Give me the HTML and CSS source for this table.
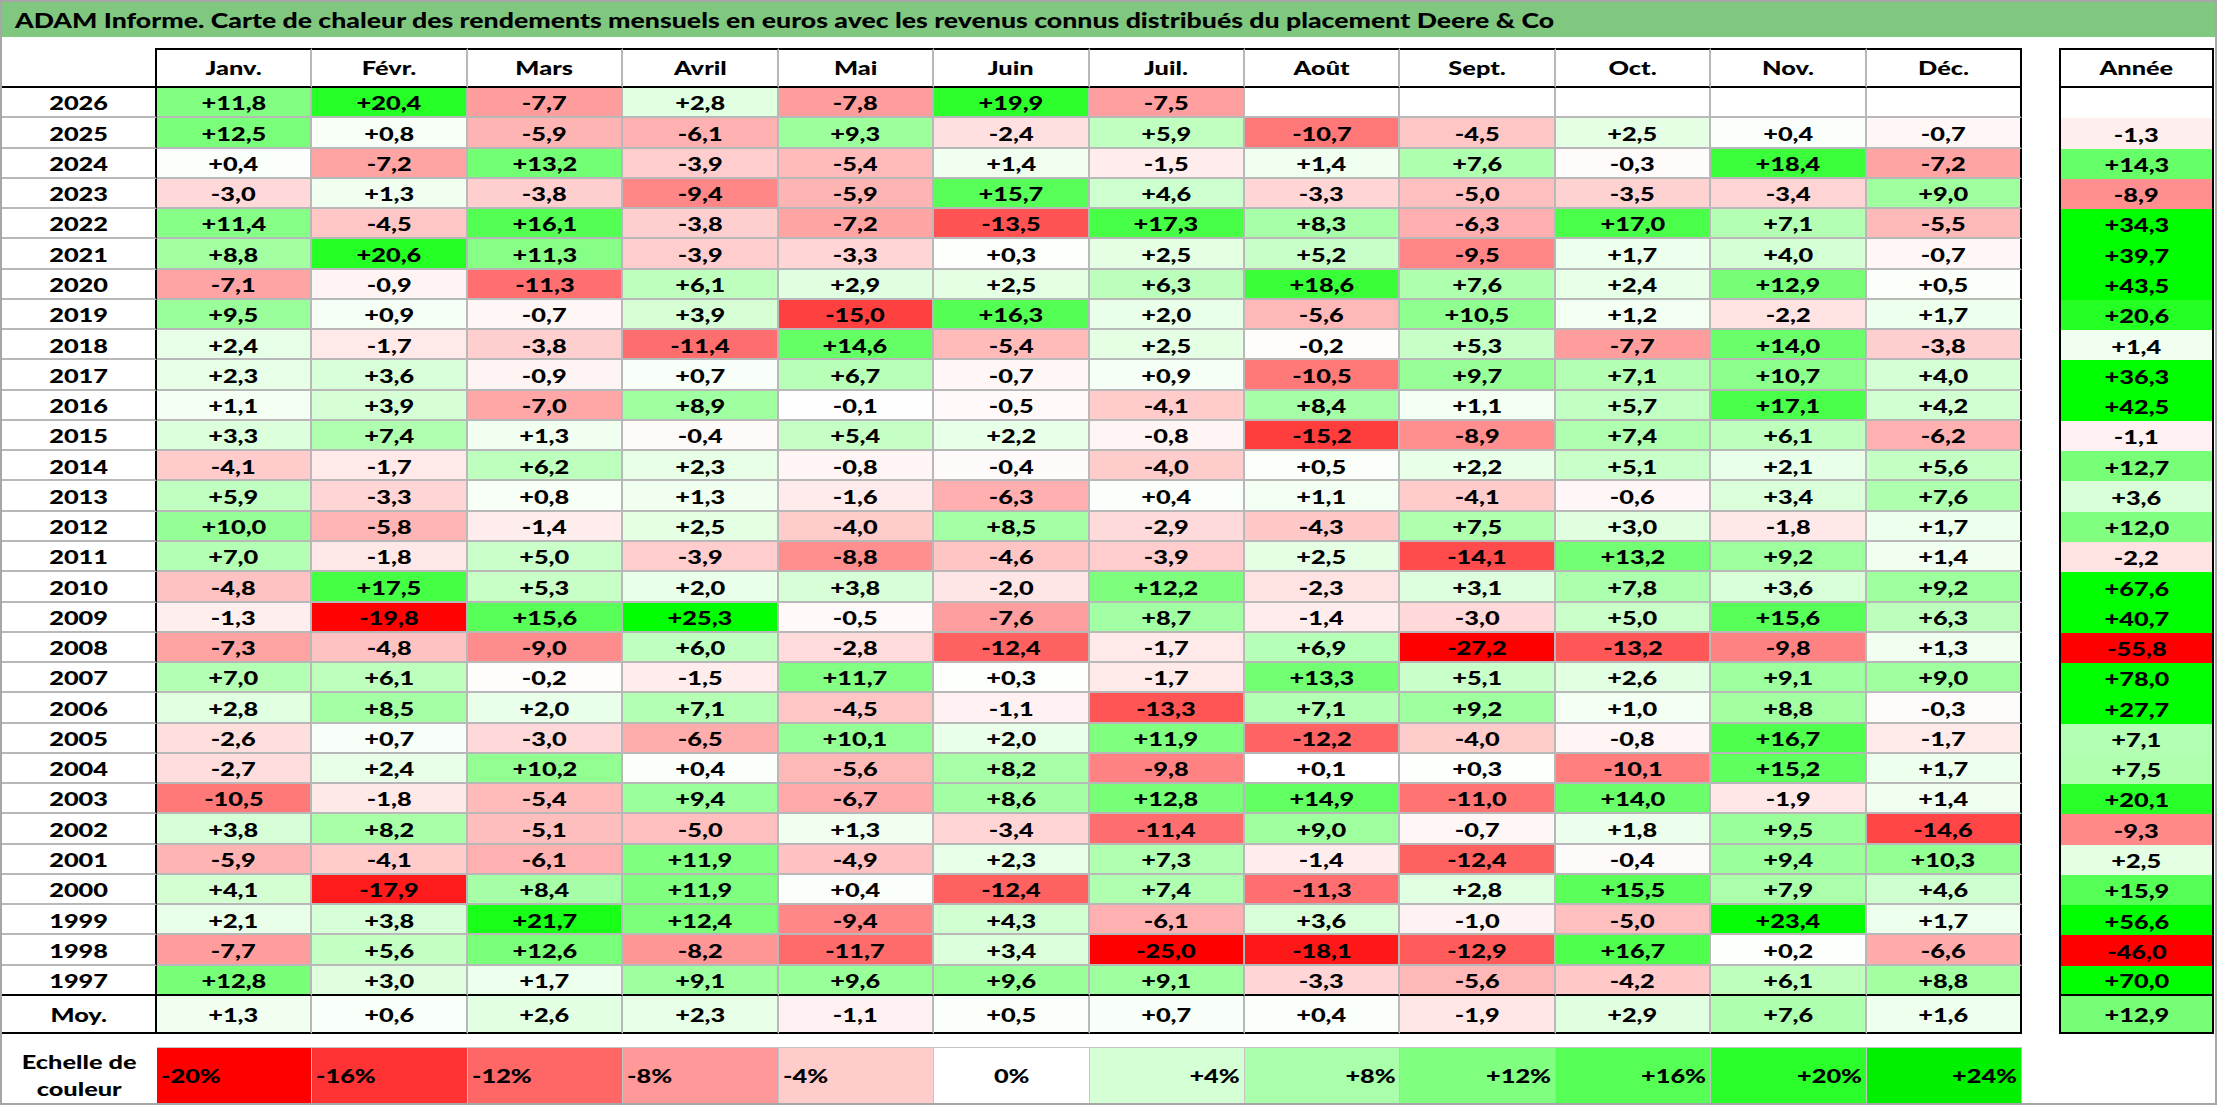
FILE: index.html
```html
<!DOCTYPE html>
<html lang="fr">
<head>
<meta charset="utf-8">
<title>ADAM Informe - Deere &amp; Co</title>
<link rel="stylesheet" href="styles.css">
</head>
<body>
<div class="frame">
  <div class="title"><b>ADAM Informe. Carte de chaleur des rendements mensuels en euros avec les revenus connus distribués du placement Deere &amp; Co</b></div>
  <div class="tables">
    <div class="main">
      <div class="row hdr"><div></div><div><b>Janv.</b></div><div><b>Févr.</b></div><div><b>Mars</b></div><div><b>Avril</b></div><div><b>Mai</b></div><div><b>Juin</b></div><div><b>Juil.</b></div><div><b>Août</b></div><div><b>Sept.</b></div><div><b>Oct.</b></div><div><b>Nov.</b></div><div><b>Déc.</b></div></div>
      <div class="row"><div><b>2026</b></div><div class="p" style="--c:130"><b>+11,8</b></div><div class="p" style="--c:38"><b>+20,4</b></div><div class="n" style="--c:157"><b>-7,7</b></div><div class="p" style="--c:225"><b>+2,8</b></div><div class="n" style="--c:156"><b>-7,8</b></div><div class="p" style="--c:44"><b>+19,9</b></div><div class="n" style="--c:159"><b>-7,5</b></div><div></div><div></div><div></div><div></div><div></div></div>
      <div class="row"><div><b>2025</b></div><div class="p" style="--c:122"><b>+12,5</b></div><div class="p" style="--c:247"><b>+0,8</b></div><div class="n" style="--c:180"><b>-5,9</b></div><div class="n" style="--c:177"><b>-6,1</b></div><div class="p" style="--c:156"><b>+9,3</b></div><div class="n" style="--c:224"><b>-2,4</b></div><div class="p" style="--c:192"><b>+5,9</b></div><div class="n" style="--c:119"><b>-10,7</b></div><div class="n" style="--c:198"><b>-4,5</b></div><div class="p" style="--c:228"><b>+2,5</b></div><div class="p" style="--c:251"><b>+0,4</b></div><div class="n" style="--c:246"><b>-0,7</b></div></div>
      <div class="row"><div><b>2024</b></div><div class="p" style="--c:251"><b>+0,4</b></div><div class="n" style="--c:163"><b>-7,2</b></div><div class="p" style="--c:115"><b>+13,2</b></div><div class="n" style="--c:205"><b>-3,9</b></div><div class="n" style="--c:186"><b>-5,4</b></div><div class="p" style="--c:240"><b>+1,4</b></div><div class="n" style="--c:236"><b>-1,5</b></div><div class="p" style="--c:240"><b>+1,4</b></div><div class="p" style="--c:174"><b>+7,6</b></div><div class="n" style="--c:251"><b>-0,3</b></div><div class="p" style="--c:60"><b>+18,4</b></div><div class="n" style="--c:163"><b>-7,2</b></div></div>
      <div class="row"><div><b>2023</b></div><div class="n" style="--c:217"><b>-3,0</b></div><div class="p" style="--c:241"><b>+1,3</b></div><div class="n" style="--c:207"><b>-3,8</b></div><div class="n" style="--c:135"><b>-9,4</b></div><div class="n" style="--c:180"><b>-5,9</b></div><div class="p" style="--c:88"><b>+15,7</b></div><div class="p" style="--c:206"><b>+4,6</b></div><div class="n" style="--c:213"><b>-3,3</b></div><div class="n" style="--c:191"><b>-5,0</b></div><div class="n" style="--c:210"><b>-3,5</b></div><div class="n" style="--c:212"><b>-3,4</b></div><div class="p" style="--c:159"><b>+9,0</b></div></div>
      <div class="row"><div><b>2022</b></div><div class="p" style="--c:134"><b>+11,4</b></div><div class="n" style="--c:198"><b>-4,5</b></div><div class="p" style="--c:84"><b>+16,1</b></div><div class="n" style="--c:207"><b>-3,8</b></div><div class="n" style="--c:163"><b>-7,2</b></div><div class="n" style="--c:83"><b>-13,5</b></div><div class="p" style="--c:71"><b>+17,3</b></div><div class="p" style="--c:167"><b>+8,3</b></div><div class="n" style="--c:175"><b>-6,3</b></div><div class="p" style="--c:74"><b>+17,0</b></div><div class="p" style="--c:180"><b>+7,1</b></div><div class="n" style="--c:185"><b>-5,5</b></div></div>
      <div class="row"><div><b>2021</b></div><div class="p" style="--c:162"><b>+8,8</b></div><div class="p" style="--c:36"><b>+20,6</b></div><div class="p" style="--c:135"><b>+11,3</b></div><div class="n" style="--c:205"><b>-3,9</b></div><div class="n" style="--c:213"><b>-3,3</b></div><div class="p" style="--c:252"><b>+0,3</b></div><div class="p" style="--c:228"><b>+2,5</b></div><div class="p" style="--c:200"><b>+5,2</b></div><div class="n" style="--c:134"><b>-9,5</b></div><div class="p" style="--c:237"><b>+1,7</b></div><div class="p" style="--c:213"><b>+4,0</b></div><div class="n" style="--c:246"><b>-0,7</b></div></div>
      <div class="row"><div><b>2020</b></div><div class="n" style="--c:164"><b>-7,1</b></div><div class="n" style="--c:244"><b>-0,9</b></div><div class="n" style="--c:111"><b>-11,3</b></div><div class="p" style="--c:190"><b>+6,1</b></div><div class="p" style="--c:224"><b>+2,9</b></div><div class="p" style="--c:228"><b>+2,5</b></div><div class="p" style="--c:188"><b>+6,3</b></div><div class="p" style="--c:57"><b>+18,6</b></div><div class="p" style="--c:174"><b>+7,6</b></div><div class="p" style="--c:230"><b>+2,4</b></div><div class="p" style="--c:118"><b>+12,9</b></div><div class="p" style="--c:250"><b>+0,5</b></div></div>
      <div class="row"><div><b>2019</b></div><div class="p" style="--c:154"><b>+9,5</b></div><div class="p" style="--c:245"><b>+0,9</b></div><div class="n" style="--c:246"><b>-0,7</b></div><div class="p" style="--c:214"><b>+3,9</b></div><div class="n" style="--c:64"><b>-15,0</b></div><div class="p" style="--c:82"><b>+16,3</b></div><div class="p" style="--c:234"><b>+2,0</b></div><div class="n" style="--c:184"><b>-5,6</b></div><div class="p" style="--c:143"><b>+10,5</b></div><div class="p" style="--c:242"><b>+1,2</b></div><div class="n" style="--c:227"><b>-2,2</b></div><div class="p" style="--c:237"><b>+1,7</b></div></div>
      <div class="row"><div><b>2018</b></div><div class="p" style="--c:230"><b>+2,4</b></div><div class="n" style="--c:233"><b>-1,7</b></div><div class="n" style="--c:207"><b>-3,8</b></div><div class="n" style="--c:110"><b>-11,4</b></div><div class="p" style="--c:100"><b>+14,6</b></div><div class="n" style="--c:186"><b>-5,4</b></div><div class="p" style="--c:228"><b>+2,5</b></div><div class="n" style="--c:252"><b>-0,2</b></div><div class="p" style="--c:199"><b>+5,3</b></div><div class="n" style="--c:157"><b>-7,7</b></div><div class="p" style="--c:106"><b>+14,0</b></div><div class="n" style="--c:207"><b>-3,8</b></div></div>
      <div class="row"><div><b>2017</b></div><div class="p" style="--c:231"><b>+2,3</b></div><div class="p" style="--c:217"><b>+3,6</b></div><div class="n" style="--c:244"><b>-0,9</b></div><div class="p" style="--c:248"><b>+0,7</b></div><div class="p" style="--c:184"><b>+6,7</b></div><div class="n" style="--c:246"><b>-0,7</b></div><div class="p" style="--c:245"><b>+0,9</b></div><div class="n" style="--c:121"><b>-10,5</b></div><div class="p" style="--c:152"><b>+9,7</b></div><div class="p" style="--c:180"><b>+7,1</b></div><div class="p" style="--c:141"><b>+10,7</b></div><div class="p" style="--c:213"><b>+4,0</b></div></div>
      <div class="row"><div><b>2016</b></div><div class="p" style="--c:243"><b>+1,1</b></div><div class="p" style="--c:214"><b>+3,9</b></div><div class="n" style="--c:166"><b>-7,0</b></div><div class="p" style="--c:160"><b>+8,9</b></div><div class="n" style="--c:254"><b>-0,1</b></div><div class="n" style="--c:249"><b>-0,5</b></div><div class="n" style="--c:203"><b>-4,1</b></div><div class="p" style="--c:166"><b>+8,4</b></div><div class="p" style="--c:243"><b>+1,1</b></div><div class="p" style="--c:194"><b>+5,7</b></div><div class="p" style="--c:73"><b>+17,1</b></div><div class="p" style="--c:210"><b>+4,2</b></div></div>
      <div class="row"><div><b>2015</b></div><div class="p" style="--c:220"><b>+3,3</b></div><div class="p" style="--c:176"><b>+7,4</b></div><div class="p" style="--c:241"><b>+1,3</b></div><div class="n" style="--c:250"><b>-0,4</b></div><div class="p" style="--c:198"><b>+5,4</b></div><div class="p" style="--c:232"><b>+2,2</b></div><div class="n" style="--c:245"><b>-0,8</b></div><div class="n" style="--c:61"><b>-15,2</b></div><div class="n" style="--c:142"><b>-8,9</b></div><div class="p" style="--c:176"><b>+7,4</b></div><div class="p" style="--c:190"><b>+6,1</b></div><div class="n" style="--c:176"><b>-6,2</b></div></div>
      <div class="row"><div><b>2014</b></div><div class="n" style="--c:203"><b>-4,1</b></div><div class="n" style="--c:233"><b>-1,7</b></div><div class="p" style="--c:189"><b>+6,2</b></div><div class="p" style="--c:231"><b>+2,3</b></div><div class="n" style="--c:245"><b>-0,8</b></div><div class="n" style="--c:250"><b>-0,4</b></div><div class="n" style="--c:204"><b>-4,0</b></div><div class="p" style="--c:250"><b>+0,5</b></div><div class="p" style="--c:232"><b>+2,2</b></div><div class="p" style="--c:201"><b>+5,1</b></div><div class="p" style="--c:233"><b>+2,1</b></div><div class="p" style="--c:196"><b>+5,6</b></div></div>
      <div class="row"><div><b>2013</b></div><div class="p" style="--c:192"><b>+5,9</b></div><div class="n" style="--c:213"><b>-3,3</b></div><div class="p" style="--c:247"><b>+0,8</b></div><div class="p" style="--c:241"><b>+1,3</b></div><div class="n" style="--c:235"><b>-1,6</b></div><div class="n" style="--c:175"><b>-6,3</b></div><div class="p" style="--c:251"><b>+0,4</b></div><div class="p" style="--c:243"><b>+1,1</b></div><div class="n" style="--c:203"><b>-4,1</b></div><div class="n" style="--c:247"><b>-0,6</b></div><div class="p" style="--c:219"><b>+3,4</b></div><div class="p" style="--c:174"><b>+7,6</b></div></div>
      <div class="row"><div><b>2012</b></div><div class="p" style="--c:149"><b>+10,0</b></div><div class="n" style="--c:181"><b>-5,8</b></div><div class="n" style="--c:237"><b>-1,4</b></div><div class="p" style="--c:228"><b>+2,5</b></div><div class="n" style="--c:204"><b>-4,0</b></div><div class="p" style="--c:165"><b>+8,5</b></div><div class="n" style="--c:218"><b>-2,9</b></div><div class="n" style="--c:200"><b>-4,3</b></div><div class="p" style="--c:175"><b>+7,5</b></div><div class="p" style="--c:223"><b>+3,0</b></div><div class="n" style="--c:232"><b>-1,8</b></div><div class="p" style="--c:237"><b>+1,7</b></div></div>
      <div class="row"><div><b>2011</b></div><div class="p" style="--c:181"><b>+7,0</b></div><div class="n" style="--c:232"><b>-1,8</b></div><div class="p" style="--c:202"><b>+5,0</b></div><div class="n" style="--c:205"><b>-3,9</b></div><div class="n" style="--c:143"><b>-8,8</b></div><div class="n" style="--c:196"><b>-4,6</b></div><div class="n" style="--c:205"><b>-3,9</b></div><div class="p" style="--c:228"><b>+2,5</b></div><div class="n" style="--c:75"><b>-14,1</b></div><div class="p" style="--c:115"><b>+13,2</b></div><div class="p" style="--c:157"><b>+9,2</b></div><div class="p" style="--c:240"><b>+1,4</b></div></div>
      <div class="row"><div><b>2010</b></div><div class="n" style="--c:194"><b>-4,8</b></div><div class="p" style="--c:69"><b>+17,5</b></div><div class="p" style="--c:199"><b>+5,3</b></div><div class="p" style="--c:234"><b>+2,0</b></div><div class="p" style="--c:215"><b>+3,8</b></div><div class="n" style="--c:230"><b>-2,0</b></div><div class="p" style="--c:125"><b>+12,2</b></div><div class="n" style="--c:226"><b>-2,3</b></div><div class="p" style="--c:222"><b>+3,1</b></div><div class="p" style="--c:172"><b>+7,8</b></div><div class="p" style="--c:217"><b>+3,6</b></div><div class="p" style="--c:157"><b>+9,2</b></div></div>
      <div class="row"><div><b>2009</b></div><div class="n" style="--c:238"><b>-1,3</b></div><div class="n" style="--c:3"><b>-19,8</b></div><div class="p" style="--c:89"><b>+15,6</b></div><div class="p" style="--c:0"><b>+25,3</b></div><div class="n" style="--c:249"><b>-0,5</b></div><div class="n" style="--c:158"><b>-7,6</b></div><div class="p" style="--c:163"><b>+8,7</b></div><div class="n" style="--c:237"><b>-1,4</b></div><div class="n" style="--c:217"><b>-3,0</b></div><div class="p" style="--c:202"><b>+5,0</b></div><div class="p" style="--c:89"><b>+15,6</b></div><div class="p" style="--c:188"><b>+6,3</b></div></div>
      <div class="row"><div><b>2008</b></div><div class="n" style="--c:162"><b>-7,3</b></div><div class="n" style="--c:194"><b>-4,8</b></div><div class="n" style="--c:140"><b>-9,0</b></div><div class="p" style="--c:191"><b>+6,0</b></div><div class="n" style="--c:219"><b>-2,8</b></div><div class="n" style="--c:97"><b>-12,4</b></div><div class="n" style="--c:233"><b>-1,7</b></div><div class="p" style="--c:182"><b>+6,9</b></div><div class="n" style="--c:0"><b>-27,2</b></div><div class="n" style="--c:87"><b>-13,2</b></div><div class="n" style="--c:130"><b>-9,8</b></div><div class="p" style="--c:241"><b>+1,3</b></div></div>
      <div class="row"><div><b>2007</b></div><div class="p" style="--c:181"><b>+7,0</b></div><div class="p" style="--c:190"><b>+6,1</b></div><div class="n" style="--c:252"><b>-0,2</b></div><div class="n" style="--c:236"><b>-1,5</b></div><div class="p" style="--c:131"><b>+11,7</b></div><div class="p" style="--c:252"><b>+0,3</b></div><div class="n" style="--c:233"><b>-1,7</b></div><div class="p" style="--c:114"><b>+13,3</b></div><div class="p" style="--c:201"><b>+5,1</b></div><div class="p" style="--c:227"><b>+2,6</b></div><div class="p" style="--c:158"><b>+9,1</b></div><div class="p" style="--c:159"><b>+9,0</b></div></div>
      <div class="row"><div><b>2006</b></div><div class="p" style="--c:225"><b>+2,8</b></div><div class="p" style="--c:165"><b>+8,5</b></div><div class="p" style="--c:234"><b>+2,0</b></div><div class="p" style="--c:180"><b>+7,1</b></div><div class="n" style="--c:198"><b>-4,5</b></div><div class="n" style="--c:241"><b>-1,1</b></div><div class="n" style="--c:85"><b>-13,3</b></div><div class="p" style="--c:180"><b>+7,1</b></div><div class="p" style="--c:157"><b>+9,2</b></div><div class="p" style="--c:244"><b>+1,0</b></div><div class="p" style="--c:162"><b>+8,8</b></div><div class="n" style="--c:251"><b>-0,3</b></div></div>
      <div class="row"><div><b>2005</b></div><div class="n" style="--c:222"><b>-2,6</b></div><div class="p" style="--c:248"><b>+0,7</b></div><div class="n" style="--c:217"><b>-3,0</b></div><div class="n" style="--c:172"><b>-6,5</b></div><div class="p" style="--c:148"><b>+10,1</b></div><div class="p" style="--c:234"><b>+2,0</b></div><div class="p" style="--c:129"><b>+11,9</b></div><div class="n" style="--c:99"><b>-12,2</b></div><div class="n" style="--c:204"><b>-4,0</b></div><div class="n" style="--c:245"><b>-0,8</b></div><div class="p" style="--c:78"><b>+16,7</b></div><div class="n" style="--c:233"><b>-1,7</b></div></div>
      <div class="row"><div><b>2004</b></div><div class="n" style="--c:221"><b>-2,7</b></div><div class="p" style="--c:230"><b>+2,4</b></div><div class="p" style="--c:147"><b>+10,2</b></div><div class="p" style="--c:251"><b>+0,4</b></div><div class="n" style="--c:184"><b>-5,6</b></div><div class="p" style="--c:168"><b>+8,2</b></div><div class="n" style="--c:130"><b>-9,8</b></div><div class="p" style="--c:254"><b>+0,1</b></div><div class="p" style="--c:252"><b>+0,3</b></div><div class="n" style="--c:126"><b>-10,1</b></div><div class="p" style="--c:94"><b>+15,2</b></div><div class="p" style="--c:237"><b>+1,7</b></div></div>
      <div class="row"><div><b>2003</b></div><div class="n" style="--c:121"><b>-10,5</b></div><div class="n" style="--c:232"><b>-1,8</b></div><div class="n" style="--c:186"><b>-5,4</b></div><div class="p" style="--c:155"><b>+9,4</b></div><div class="n" style="--c:170"><b>-6,7</b></div><div class="p" style="--c:164"><b>+8,6</b></div><div class="p" style="--c:119"><b>+12,8</b></div><div class="p" style="--c:97"><b>+14,9</b></div><div class="n" style="--c:115"><b>-11,0</b></div><div class="p" style="--c:106"><b>+14,0</b></div><div class="n" style="--c:231"><b>-1,9</b></div><div class="p" style="--c:240"><b>+1,4</b></div></div>
      <div class="row"><div><b>2002</b></div><div class="p" style="--c:215"><b>+3,8</b></div><div class="p" style="--c:168"><b>+8,2</b></div><div class="n" style="--c:190"><b>-5,1</b></div><div class="n" style="--c:191"><b>-5,0</b></div><div class="p" style="--c:241"><b>+1,3</b></div><div class="n" style="--c:212"><b>-3,4</b></div><div class="n" style="--c:110"><b>-11,4</b></div><div class="p" style="--c:159"><b>+9,0</b></div><div class="n" style="--c:246"><b>-0,7</b></div><div class="p" style="--c:236"><b>+1,8</b></div><div class="p" style="--c:154"><b>+9,5</b></div><div class="n" style="--c:69"><b>-14,6</b></div></div>
      <div class="row"><div><b>2001</b></div><div class="n" style="--c:180"><b>-5,9</b></div><div class="n" style="--c:203"><b>-4,1</b></div><div class="n" style="--c:177"><b>-6,1</b></div><div class="p" style="--c:129"><b>+11,9</b></div><div class="n" style="--c:193"><b>-4,9</b></div><div class="p" style="--c:231"><b>+2,3</b></div><div class="p" style="--c:177"><b>+7,3</b></div><div class="n" style="--c:237"><b>-1,4</b></div><div class="n" style="--c:97"><b>-12,4</b></div><div class="n" style="--c:250"><b>-0,4</b></div><div class="p" style="--c:155"><b>+9,4</b></div><div class="p" style="--c:146"><b>+10,3</b></div></div>
      <div class="row"><div><b>2000</b></div><div class="p" style="--c:211"><b>+4,1</b></div><div class="n" style="--c:27"><b>-17,9</b></div><div class="p" style="--c:166"><b>+8,4</b></div><div class="p" style="--c:129"><b>+11,9</b></div><div class="p" style="--c:251"><b>+0,4</b></div><div class="n" style="--c:97"><b>-12,4</b></div><div class="p" style="--c:176"><b>+7,4</b></div><div class="n" style="--c:111"><b>-11,3</b></div><div class="p" style="--c:225"><b>+2,8</b></div><div class="p" style="--c:90"><b>+15,5</b></div><div class="p" style="--c:171"><b>+7,9</b></div><div class="p" style="--c:206"><b>+4,6</b></div></div>
      <div class="row"><div><b>1999</b></div><div class="p" style="--c:233"><b>+2,1</b></div><div class="p" style="--c:215"><b>+3,8</b></div><div class="p" style="--c:24"><b>+21,7</b></div><div class="p" style="--c:123"><b>+12,4</b></div><div class="n" style="--c:135"><b>-9,4</b></div><div class="p" style="--c:209"><b>+4,3</b></div><div class="n" style="--c:177"><b>-6,1</b></div><div class="p" style="--c:217"><b>+3,6</b></div><div class="n" style="--c:242"><b>-1,0</b></div><div class="n" style="--c:191"><b>-5,0</b></div><div class="p" style="--c:6"><b>+23,4</b></div><div class="p" style="--c:237"><b>+1,7</b></div></div>
      <div class="row"><div><b>1998</b></div><div class="n" style="--c:157"><b>-7,7</b></div><div class="p" style="--c:196"><b>+5,6</b></div><div class="p" style="--c:121"><b>+12,6</b></div><div class="n" style="--c:150"><b>-8,2</b></div><div class="n" style="--c:106"><b>-11,7</b></div><div class="p" style="--c:219"><b>+3,4</b></div><div class="n" style="--c:0"><b>-25,0</b></div><div class="n" style="--c:24"><b>-18,1</b></div><div class="n" style="--c:91"><b>-12,9</b></div><div class="p" style="--c:78"><b>+16,7</b></div><div class="p" style="--c:253"><b>+0,2</b></div><div class="n" style="--c:171"><b>-6,6</b></div></div>
      <div class="row last"><div><b>1997</b></div><div class="p" style="--c:119"><b>+12,8</b></div><div class="p" style="--c:223"><b>+3,0</b></div><div class="p" style="--c:237"><b>+1,7</b></div><div class="p" style="--c:158"><b>+9,1</b></div><div class="p" style="--c:153"><b>+9,6</b></div><div class="p" style="--c:153"><b>+9,6</b></div><div class="p" style="--c:158"><b>+9,1</b></div><div class="n" style="--c:213"><b>-3,3</b></div><div class="n" style="--c:184"><b>-5,6</b></div><div class="n" style="--c:201"><b>-4,2</b></div><div class="p" style="--c:190"><b>+6,1</b></div><div class="p" style="--c:162"><b>+8,8</b></div></div>
      <div class="row moy"><div><b>Moy.</b></div><div class="p" style="--c:241"><b>+1,3</b></div><div class="p" style="--c:249"><b>+0,6</b></div><div class="p" style="--c:227"><b>+2,6</b></div><div class="p" style="--c:231"><b>+2,3</b></div><div class="n" style="--c:241"><b>-1,1</b></div><div class="p" style="--c:250"><b>+0,5</b></div><div class="p" style="--c:248"><b>+0,7</b></div><div class="p" style="--c:251"><b>+0,4</b></div><div class="n" style="--c:231"><b>-1,9</b></div><div class="p" style="--c:224"><b>+2,9</b></div><div class="p" style="--c:174"><b>+7,6</b></div><div class="p" style="--c:238"><b>+1,6</b></div></div>
    </div>
    <div class="annee">
      <div class="ah"><b>Année</b></div>
      <div></div>
      <div class="n" style="--c:238"><b>-1,3</b></div>
      <div class="p" style="--c:103"><b>+14,3</b></div>
      <div class="n" style="--c:142"><b>-8,9</b></div>
      <div class="p" style="--c:0"><b>+34,3</b></div>
      <div class="p" style="--c:0"><b>+39,7</b></div>
      <div class="p" style="--c:0"><b>+43,5</b></div>
      <div class="p" style="--c:36"><b>+20,6</b></div>
      <div class="p" style="--c:240"><b>+1,4</b></div>
      <div class="p" style="--c:0"><b>+36,3</b></div>
      <div class="p" style="--c:0"><b>+42,5</b></div>
      <div class="n" style="--c:241"><b>-1,1</b></div>
      <div class="p" style="--c:120"><b>+12,7</b></div>
      <div class="p" style="--c:217"><b>+3,6</b></div>
      <div class="p" style="--c:128"><b>+12,0</b></div>
      <div class="n" style="--c:227"><b>-2,2</b></div>
      <div class="p" style="--c:0"><b>+67,6</b></div>
      <div class="p" style="--c:0"><b>+40,7</b></div>
      <div class="n" style="--c:0"><b>-55,8</b></div>
      <div class="p" style="--c:0"><b>+78,0</b></div>
      <div class="p" style="--c:0"><b>+27,7</b></div>
      <div class="p" style="--c:180"><b>+7,1</b></div>
      <div class="p" style="--c:175"><b>+7,5</b></div>
      <div class="p" style="--c:41"><b>+20,1</b></div>
      <div class="n" style="--c:136"><b>-9,3</b></div>
      <div class="p" style="--c:228"><b>+2,5</b></div>
      <div class="p" style="--c:86"><b>+15,9</b></div>
      <div class="p" style="--c:0"><b>+56,6</b></div>
      <div class="n" style="--c:0"><b>-46,0</b></div>
      <div class="p al" style="--c:0"><b>+70,0</b></div>
      <div class="p am" style="--c:118"><b>+12,9</b></div>
    </div>
  </div>
  <div class="legend">
    <div class="lab"><b>Echelle de<br>couleur</b></div>
    <div class="neg" style="background:rgb(255,0,0)"><b>-20%</b></div>
    <div class="neg" style="background:rgb(255,51,51)"><b>-16%</b></div>
    <div class="neg" style="background:rgb(255,102,102)"><b>-12%</b></div>
    <div class="neg" style="background:rgb(255,153,153)"><b>-8%</b></div>
    <div class="neg" style="background:rgb(255,204,204)"><b>-4%</b></div>
    <div class="zero"><b>0%</b></div>
    <div class="pos" style="background:rgb(213,255,213)"><b>+4%</b></div>
    <div class="pos" style="background:rgb(170,255,170)"><b>+8%</b></div>
    <div class="pos" style="background:rgb(128,255,128)"><b>+12%</b></div>
    <div class="pos" style="background:rgb(85,255,85)"><b>+16%</b></div>
    <div class="pos" style="background:rgb(43,255,43)"><b>+20%</b></div>
    <div class="pos" style="background:rgb(0,240,0)"><b>+24%</b></div>
  </div>
</div>
</body>
</html>
```

FILE: styles.css
```css
* {
  box-sizing: border-box;
  margin: 0;
  padding: 0;
}

html,
body {
  background: #ffffff;
}

body {
  font-family: Lato, "Open Sans", "Liberation Sans", sans-serif;
  font-weight: 900;
  font-size: 19.5px;
  color: #000000;
}

b {
  display: inline-block;
  font-weight: 900;
  line-height: 1;
  white-space: nowrap;
  transform: scaleX(1.3);
}

.frame {
  width: 2217px;
  height: 1105px;
  border: 2px solid #a6a6a6;
  display: flex;
  flex-direction: column;
  overflow: hidden;
}

.title {
  flex: none;
  height: 35px;
  background: #80c880;
  display: flex;
  align-items: center;
  padding-left: 13px;
  padding-top: 2px;
  font-size: 20.5px;
}

.title b {
  transform-origin: left center;
}

.tables {
  flex: none;
  margin-top: 11px;
  height: 986px;
  display: flex;
  gap: 37px;
}

.main {
  width: 2020px;
  flex: none;
}

.row {
  display: grid;
  grid-template-columns: 155px repeat(12, 1fr);
  height: 30.2667px;
}

.row > div {
  display: flex;
  align-items: center;
  justify-content: center;
  border-right: 2px solid #b8b8b8;
  border-bottom: 2px solid #b8b8b8;
  padding-top: 2px;
}

.row > div:first-child,
.row > div:last-child {
  border-right-color: #000000;
}

.row.hdr {
  height: 40px;
}

.row.hdr > div {
  border-top: 2px solid #000000;
  border-bottom-color: #000000;
  padding-top: 0;
}

.row.hdr > div:first-child {
  border-top: none;
}

.row.last > div,
.row.moy > div {
  border-bottom-color: #000000;
}

.row.moy {
  height: 38px;
}

.n {
  background: rgb(255, var(--c), var(--c));
}

.p {
  background: rgb(var(--c), 255, var(--c));
}

.annee {
  width: 155px;
  flex: none;
  border: 2px solid #000000;
  display: flex;
  flex-direction: column;
}

.annee > div {
  flex: none;
  height: 30.2667px;
  display: flex;
  align-items: center;
  justify-content: center;
  padding-top: 2px;
}

.annee > .ah {
  height: 38px;
  border-bottom: 2px solid #000000;
  padding-top: 0;
}

.annee > .al {
  border-bottom: 2px solid #000000;
}

.annee > .am {
  height: 36px;
}

.legend {
  flex: none;
  margin-top: 13px;
  width: 2020px;
  height: 56px;
  display: grid;
  grid-template-columns: 155px repeat(12, 1fr);
}

.legend > div {
  display: flex;
  align-items: center;
  border-top: 1px solid #c4c4c4;
  border-right: 1px solid #c4c4c4;
}

.legend > .lab {
  border: none;
  justify-content: center;
  text-align: center;
}

.legend > .lab b {
  line-height: 27px;
}

.legend > .neg {
  justify-content: flex-start;
  padding-left: 4px;
}

.legend > .neg b {
  transform-origin: left center;
}

.legend > .zero {
  justify-content: center;
}

.legend > .pos {
  justify-content: flex-end;
  padding-right: 4px;
}

.legend > .pos b {
  transform-origin: right center;
}
```
